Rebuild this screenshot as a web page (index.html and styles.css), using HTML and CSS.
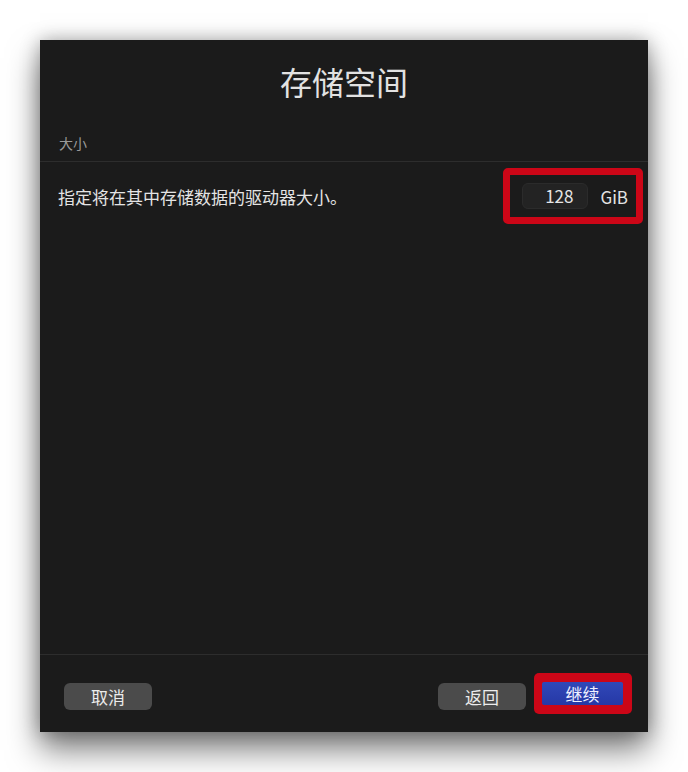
FILE: index.html
```html
<!DOCTYPE html>
<html lang="zh-CN">
<head>
<meta charset="utf-8">
<title>存储空间</title>
<link rel="stylesheet" href="styles.css">
</head>
<body>
<div class="panel">
  <h1 class="title">存储空间</h1>
  <div class="section">大小</div>
  <div class="row">
    <div class="label">指定将在其中存储数据的驱动器大小。</div>
    <div class="mark-size">
      <div class="field">128</div>
      <div class="unit">GiB</div>
    </div>
  </div>
  <div class="spacer"></div>
  <div class="footer">
    <button class="btn">取消</button>
    <div class="grow"></div>
    <button class="btn">返回</button>
    <div class="mark-btn">
      <button class="btn-primary">继续</button>
    </div>
  </div>
</div>
</body>
</html>
```
FILE: styles.css
```css
html, body {
  margin: 0;
  padding: 0;
  background: #ffffff;
}
body {
  font-family: "Noto Sans CJK SC", "Noto Sans", sans-serif;
  width: 688px;
  height: 772px;
  overflow: hidden;
}
.panel {
  margin: 40px 0 0 40px;
  width: 608px;
  height: 692px;
  background: #1b1b1b;
  display: flex;
  flex-direction: column;
  box-shadow: 0 18px 30px rgba(0, 0, 0, 0.5), 0 0 18px rgba(0, 0, 0, 0.3);
}
.title {
  margin: 25px 0 0;
  font-size: 32px;
  line-height: 32px;
  font-weight: 400;
  text-align: center;
  color: #e2e2e2;
}
.section {
  margin-top: 39px;
  padding: 0 19px 11px;
  font-size: 14px;
  line-height: 14px;
  color: #999999;
  border-bottom: 1px solid #2d2d2d;
}
.row {
  display: flex;
  align-items: center;
  justify-content: space-between;
  padding: 6px 5px 0 18px;
  height: 62px;
  box-sizing: border-box;
}
.label {
  font-size: 17px;
  line-height: 17px;
  color: #e4e4e4;
}
.mark-size {
  display: flex;
  align-items: center;
  width: 140px;
  height: 56px;
  box-sizing: border-box;
  background: #1b1b1b;
  border: 7px solid #cc0617;
  border-radius: 5px;
  padding: 0 8px 0 12px;
}
.field {
  width: 67px;
  height: 26px;
  box-sizing: border-box;
  background: #232323;
  border: 1px solid #2b2b2b;
  border-radius: 6px;
  font-size: 17px;
  line-height: 24px;
  color: #e6e6e6;
  text-align: right;
  padding-right: 14px;
}
.unit {
  margin-left: 12px;
  font-size: 17px;
  line-height: 17px;
  color: #e4e4e4;
}
.spacer {
  flex: 1;
}
.footer {
  border-top: 1px solid #2d2d2d;
  height: 78px;
  box-sizing: border-box;
  display: flex;
  align-items: flex-start;
  padding: 28px 16px 0 24px;
}
.grow {
  flex: 1;
}
.btn {
  width: 88px;
  height: 27px;
  border: none;
  border-radius: 6px;
  background: #4b4b4b;
  color: #ececec;
  font-family: inherit;
  font-size: 17px;
  line-height: 27px;
  padding: 0;
}
.mark-btn {
  margin-left: 8px;
  margin-top: -10px;
  padding: 9px 9px 9px 8px;
  background: #cc0617;
  border-radius: 5px;
}
.btn-primary {
  display: block;
  width: 81px;
  height: 23px;
  border: none;
  border-radius: 2px;
  background: linear-gradient(#3048b8, #2638a6);
  color: #eef0ff;
  font-family: inherit;
  font-size: 17px;
  line-height: 23px;
  padding: 0;
}
```
